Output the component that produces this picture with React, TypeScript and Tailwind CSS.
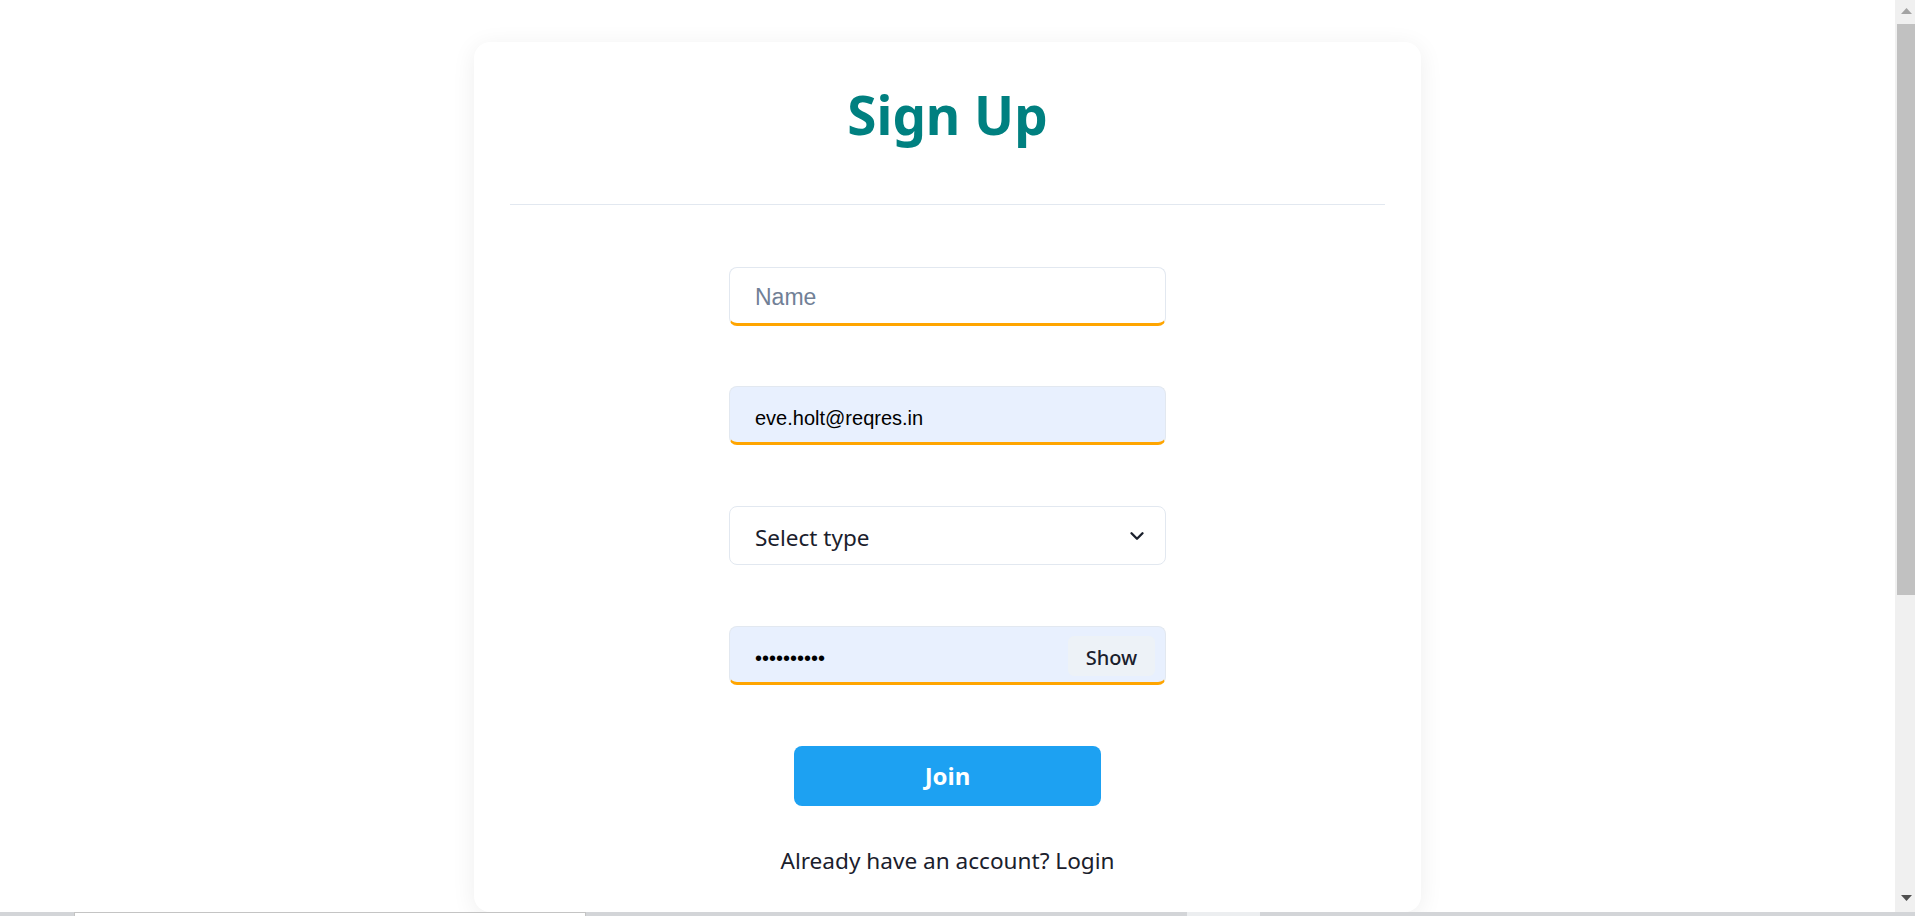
import { ChevronDown } from "lucide-react";

const ui = { fontFamily: '"Noto Sans", "Open Sans", sans-serif' };
const arial = { fontFamily: '"Liberation Sans", Arial, sans-serif' };

const SignUpCard = () => {
  return (
    <div className="mx-auto mt-[42px] h-[870px] w-[947px] rounded-2xl bg-white px-[36px] shadow-[0_4px_24px_rgba(0,0,0,0.07)]">
      <div className="flex h-[163px] items-center justify-center border-b border-[#e2e8f0] pb-[17px]">
        <h1 className="text-[53px] font-bold text-[#008080]" style={ui}>
          Sign Up
        </h1>
      </div>

      <form className="flex flex-col items-center pt-[62px]">
        <div className="flex w-[437px] flex-col gap-[60px]">
          <input
            className="h-[59px] rounded-lg border border-b-[3px] border-[#e2e8f0] border-b-[#ffa500] bg-white pl-[25px] pt-[6px] text-[20px] text-black outline-none placeholder:text-[23px] placeholder:text-[#718096]"
            style={arial}
            placeholder="Name"
          />
          <input
            className="h-[59px] rounded-lg border border-b-[3px] border-[#e2e8f0] border-b-[#ffa500] bg-[#e8f0fe] pl-[25px] pt-[7px] text-[20px] text-black outline-none"
            style={arial}
            defaultValue="eve.holt@reqres.in"
            readOnly
          />
          <div className="mt-[1px] flex h-[59px] items-center rounded-lg border border-[#e2e8f0] bg-white pl-[25px] pr-[17px] pt-[4px]">
            <select
              className="flex-1 appearance-none bg-transparent text-[22.5px] text-[#1a202c] outline-none"
              style={ui}
              defaultValue=""
            >
              <option value="">Select type</option>
            </select>
            <ChevronDown size={22} strokeWidth={2.6} className="-mt-[3px] text-[#1a202c]" />
          </div>
          <div className="mt-[1px] flex h-[59px] items-center rounded-lg border border-b-[3px] border-[#e2e8f0] border-b-[#ffa500] bg-[#e8f0fe] pl-[25px] pr-[10px]">
            <input
              type="password"
              className="flex-1 bg-transparent pt-[6px] text-[20px] text-black outline-none"
              style={arial}
              defaultValue="1234567890"
              readOnly
            />
            <button
              type="button"
              className="mt-[3px] h-[40px] w-[87px] rounded-md bg-[#edf2f7] pt-[3px] text-[20px] font-medium text-[#1a202c]"
              style={ui}
            >
              Show
            </button>
          </div>
        </div>

        <button
          type="button"
          className="mt-[61px] h-[60px] w-[307px] rounded-lg bg-[#1da1f2] text-[24px] font-bold text-white"
          style={ui}
        >
          Join
        </button>

        <p className="mt-[38px] text-[22.6px] text-[#1a202c]" style={ui}>
          Already have an account? Login
        </p>
      </form>
    </div>
  );
};

const Scrollbar = () => (
  <div className="flex w-[20px] flex-col items-end bg-[#f0f0f0]">
    <div className="flex h-[24px] w-full items-center justify-center pb-[3px] pl-[2px]">
      <svg width="11" height="6" viewBox="0 0 11 6">
        <path d="M0 6 L5.5 0 L11 6 Z" fill="#a3a3a3" />
      </svg>
    </div>
    <div className="h-[571px] w-[18px] bg-[#c1c1c1]" />
    <div className="flex-1" />
    <div className="flex h-[24px] w-full items-center justify-center pb-[5px] pl-[2px]">
      <svg width="11" height="6" viewBox="0 0 11 6">
        <path d="M0 0 L11 0 L5.5 6 Z" fill="#505050" />
      </svg>
    </div>
  </div>
);

const BottomStrip = () => (
  <div className="flex h-[4px] bg-[#d3d5d8]">
    <div className="w-[74px]" />
    <div className="w-[512px] border border-b-0 border-[#c4c4c4] bg-white" />
    <div className="w-[601px]" />
    <div className="w-[73px] bg-[#eceef0]" />
  </div>
);

export default function App() {
  return (
    <div className="flex h-screen flex-col overflow-hidden bg-white">
      <div className="flex min-h-0 flex-1">
        <main className="min-w-0 flex-1 overflow-hidden">
          <SignUpCard />
        </main>
        <Scrollbar />
      </div>
      <BottomStrip />
    </div>
  );
}
